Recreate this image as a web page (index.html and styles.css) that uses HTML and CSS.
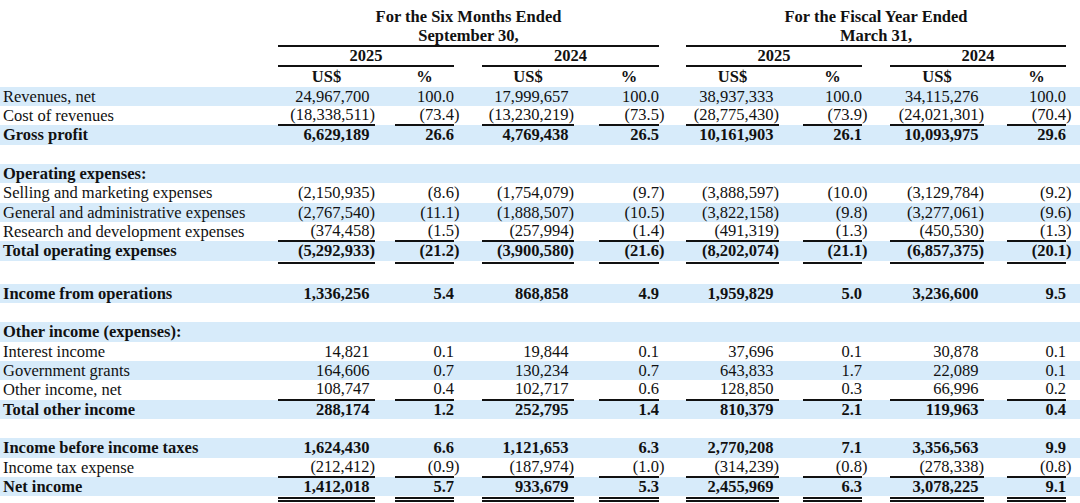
FILE: index.html
```html
<!DOCTYPE html>
<html lang="en">
<head>
<meta charset="utf-8">
<title>Consolidated Statements of Operations</title>
<link rel="stylesheet" href="styles.css">
</head>
<body>
<table class="fin">
  <colgroup>
    <col class="w-label"><col class="w-a"><col class="w-b"><col class="w-c"><col class="w-d"><col class="w-e"><col class="w-f"><col class="w-g"><col class="w-h"><col class="w-end">
  </colgroup>
  <thead>
    <tr class="hrow">
      <td></td>
      <td colspan="4" class="ca"><div class="hc">For the Six Months Ended</div></td>
      <td colspan="4" class="ce"><div class="hc">For the Fiscal Year Ended</div></td>
      <td></td>
    </tr>
    <tr class="hrow">
      <td></td>
      <td colspan="4" class="ca"><div class="hc ul">September 30,</div></td>
      <td colspan="4" class="ce"><div class="hc ul">March 31,</div></td>
      <td></td>
    </tr>
    <tr class="hrow">
      <td></td>
      <td colspan="2" class="ca"><div class="hc ul">2025</div></td>
      <td colspan="2" class="cc"><div class="hc ul">2024</div></td>
      <td colspan="2" class="ce"><div class="hc ul">2025</div></td>
      <td colspan="2" class="cg"><div class="hc ul">2024</div></td>
      <td></td>
    </tr>
    <tr class="hrow">
      <td></td>
      <td class="ca"><div class="hc">US$</div></td>
      <td class="cb"><div class="hc">%</div></td>
      <td class="cc"><div class="hc">US$</div></td>
      <td class="cd"><div class="hc">%</div></td>
      <td class="ce"><div class="hc">US$</div></td>
      <td class="cf"><div class="hc">%</div></td>
      <td class="cg"><div class="hc">US$</div></td>
      <td class="ch"><div class="hc">%</div></td>
      <td></td>
    </tr>
  </thead>
  <tbody>
    <tr class="alt">
      <td class="lbl">Revenues, net</td>
      <td class="ca"><div class="v usd">24,967,700</div></td>
      <td class="cb"><div class="v">100.0</div></td>
      <td class="cc"><div class="v usd">17,999,657</div></td>
      <td class="cd"><div class="v">100.0</div></td>
      <td class="ce"><div class="v usd">38,937,333</div></td>
      <td class="cf"><div class="v">100.0</div></td>
      <td class="cg"><div class="v usd">34,115,276</div></td>
      <td class="ch"><div class="v">100.0</div></td>
      <td></td>
    </tr>
    <tr>
      <td class="lbl">Cost of revenues</td>
      <td class="ca"><div class="v usd ul">(18,338,511<span class="rp">)</span></div></td>
      <td class="cb"><div class="v ul">(73.4<span class="rp">)</span></div></td>
      <td class="cc"><div class="v usd ul">(13,230,219<span class="rp">)</span></div></td>
      <td class="cd"><div class="v ul">(73.5<span class="rp">)</span></div></td>
      <td class="ce"><div class="v usd ul">(28,775,430<span class="rp">)</span></div></td>
      <td class="cf"><div class="v ul">(73.9<span class="rp">)</span></div></td>
      <td class="cg"><div class="v usd ul">(24,021,301<span class="rp">)</span></div></td>
      <td class="ch"><div class="v ul">(70.4<span class="rp">)</span></div></td>
      <td></td>
    </tr>
    <tr class="alt strong">
      <td class="lbl">Gross profit</td>
      <td class="ca"><div class="v usd">6,629,189</div></td>
      <td class="cb"><div class="v">26.6</div></td>
      <td class="cc"><div class="v usd">4,769,438</div></td>
      <td class="cd"><div class="v">26.5</div></td>
      <td class="ce"><div class="v usd">10,161,903</div></td>
      <td class="cf"><div class="v">26.1</div></td>
      <td class="cg"><div class="v usd">10,093,975</div></td>
      <td class="ch"><div class="v">29.6</div></td>
      <td></td>
    </tr>
    <tr class="blank"><td colspan="10"><div class="sp"></div></td></tr>
    <tr class="alt strong">
      <td class="lbl" colspan="10"><div class="sp">Operating expenses:</div></td>
    </tr>
    <tr>
      <td class="lbl">Selling and marketing expenses</td>
      <td class="ca"><div class="v usd">(2,150,935<span class="rp">)</span></div></td>
      <td class="cb"><div class="v">(8.6<span class="rp">)</span></div></td>
      <td class="cc"><div class="v usd">(1,754,079<span class="rp">)</span></div></td>
      <td class="cd"><div class="v">(9.7<span class="rp">)</span></div></td>
      <td class="ce"><div class="v usd">(3,888,597<span class="rp">)</span></div></td>
      <td class="cf"><div class="v">(10.0<span class="rp">)</span></div></td>
      <td class="cg"><div class="v usd">(3,129,784<span class="rp">)</span></div></td>
      <td class="ch"><div class="v">(9.2<span class="rp">)</span></div></td>
      <td></td>
    </tr>
    <tr class="alt">
      <td class="lbl">General and administrative expenses</td>
      <td class="ca"><div class="v usd">(2,767,540<span class="rp">)</span></div></td>
      <td class="cb"><div class="v">(11.1<span class="rp">)</span></div></td>
      <td class="cc"><div class="v usd">(1,888,507<span class="rp">)</span></div></td>
      <td class="cd"><div class="v">(10.5<span class="rp">)</span></div></td>
      <td class="ce"><div class="v usd">(3,822,158<span class="rp">)</span></div></td>
      <td class="cf"><div class="v">(9.8<span class="rp">)</span></div></td>
      <td class="cg"><div class="v usd">(3,277,061<span class="rp">)</span></div></td>
      <td class="ch"><div class="v">(9.6<span class="rp">)</span></div></td>
      <td></td>
    </tr>
    <tr>
      <td class="lbl">Research and development expenses</td>
      <td class="ca"><div class="v usd ul">(374,458<span class="rp">)</span></div></td>
      <td class="cb"><div class="v ul">(1.5<span class="rp">)</span></div></td>
      <td class="cc"><div class="v usd ul">(257,994<span class="rp">)</span></div></td>
      <td class="cd"><div class="v ul">(1.4<span class="rp">)</span></div></td>
      <td class="ce"><div class="v usd ul">(491,319<span class="rp">)</span></div></td>
      <td class="cf"><div class="v ul">(1.3<span class="rp">)</span></div></td>
      <td class="cg"><div class="v usd ul">(450,530<span class="rp">)</span></div></td>
      <td class="ch"><div class="v ul">(1.3<span class="rp">)</span></div></td>
      <td></td>
    </tr>
    <tr class="alt strong">
      <td class="lbl">Total operating expenses</td>
      <td class="ca"><div class="v usd">(5,292,933<span class="rp">)</span></div></td>
      <td class="cb"><div class="v">(21.2<span class="rp">)</span></div></td>
      <td class="cc"><div class="v usd">(3,900,580<span class="rp">)</span></div></td>
      <td class="cd"><div class="v">(21.6<span class="rp">)</span></div></td>
      <td class="ce"><div class="v usd">(8,202,074<span class="rp">)</span></div></td>
      <td class="cf"><div class="v">(21.1<span class="rp">)</span></div></td>
      <td class="cg"><div class="v usd">(6,857,375<span class="rp">)</span></div></td>
      <td class="ch"><div class="v">(20.1<span class="rp">)</span></div></td>
      <td></td>
    </tr>
    <tr class="rule">
      <td></td>
      <td class="ca"><div class="ln"></div></td>
      <td class="cb"><div class="ln"></div></td>
      <td class="cc"><div class="ln"></div></td>
      <td class="cd"><div class="ln"></div></td>
      <td class="ce"><div class="ln"></div></td>
      <td class="cf"><div class="ln"></div></td>
      <td class="cg"><div class="ln"></div></td>
      <td class="ch"><div class="ln"></div></td>
      <td></td>
    </tr>
    <tr class="alt strong">
      <td class="lbl">Income from operations</td>
      <td class="ca"><div class="v usd">1,336,256</div></td>
      <td class="cb"><div class="v">5.4</div></td>
      <td class="cc"><div class="v usd">868,858</div></td>
      <td class="cd"><div class="v">4.9</div></td>
      <td class="ce"><div class="v usd">1,959,829</div></td>
      <td class="cf"><div class="v">5.0</div></td>
      <td class="cg"><div class="v usd">3,236,600</div></td>
      <td class="ch"><div class="v">9.5</div></td>
      <td></td>
    </tr>
    <tr class="blank"><td colspan="10"><div class="sp"></div></td></tr>
    <tr class="alt strong">
      <td class="lbl" colspan="10"><div class="sp">Other income (expenses):</div></td>
    </tr>
    <tr>
      <td class="lbl">Interest income</td>
      <td class="ca"><div class="v usd">14,821</div></td>
      <td class="cb"><div class="v">0.1</div></td>
      <td class="cc"><div class="v usd">19,844</div></td>
      <td class="cd"><div class="v">0.1</div></td>
      <td class="ce"><div class="v usd">37,696</div></td>
      <td class="cf"><div class="v">0.1</div></td>
      <td class="cg"><div class="v usd">30,878</div></td>
      <td class="ch"><div class="v">0.1</div></td>
      <td></td>
    </tr>
    <tr class="alt">
      <td class="lbl">Government grants</td>
      <td class="ca"><div class="v usd">164,606</div></td>
      <td class="cb"><div class="v">0.7</div></td>
      <td class="cc"><div class="v usd">130,234</div></td>
      <td class="cd"><div class="v">0.7</div></td>
      <td class="ce"><div class="v usd">643,833</div></td>
      <td class="cf"><div class="v">1.7</div></td>
      <td class="cg"><div class="v usd">22,089</div></td>
      <td class="ch"><div class="v">0.1</div></td>
      <td></td>
    </tr>
    <tr>
      <td class="lbl">Other income, net</td>
      <td class="ca"><div class="v usd ul">108,747</div></td>
      <td class="cb"><div class="v ul">0.4</div></td>
      <td class="cc"><div class="v usd ul">102,717</div></td>
      <td class="cd"><div class="v ul">0.6</div></td>
      <td class="ce"><div class="v usd ul">128,850</div></td>
      <td class="cf"><div class="v ul">0.3</div></td>
      <td class="cg"><div class="v usd ul">66,996</div></td>
      <td class="ch"><div class="v ul">0.2</div></td>
      <td></td>
    </tr>
    <tr class="alt strong">
      <td class="lbl">Total other income</td>
      <td class="ca"><div class="v usd">288,174</div></td>
      <td class="cb"><div class="v">1.2</div></td>
      <td class="cc"><div class="v usd">252,795</div></td>
      <td class="cd"><div class="v">1.4</div></td>
      <td class="ce"><div class="v usd">810,379</div></td>
      <td class="cf"><div class="v">2.1</div></td>
      <td class="cg"><div class="v usd">119,963</div></td>
      <td class="ch"><div class="v">0.4</div></td>
      <td></td>
    </tr>
    <tr class="blank"><td colspan="10"><div class="sp"></div></td></tr>
    <tr class="alt strong">
      <td class="lbl">Income before income taxes</td>
      <td class="ca"><div class="v usd">1,624,430</div></td>
      <td class="cb"><div class="v">6.6</div></td>
      <td class="cc"><div class="v usd">1,121,653</div></td>
      <td class="cd"><div class="v">6.3</div></td>
      <td class="ce"><div class="v usd">2,770,208</div></td>
      <td class="cf"><div class="v">7.1</div></td>
      <td class="cg"><div class="v usd">3,356,563</div></td>
      <td class="ch"><div class="v">9.9</div></td>
      <td></td>
    </tr>
    <tr>
      <td class="lbl">Income tax expense</td>
      <td class="ca"><div class="v usd ul">(212,412<span class="rp">)</span></div></td>
      <td class="cb"><div class="v ul">(0.9<span class="rp">)</span></div></td>
      <td class="cc"><div class="v usd ul">(187,974<span class="rp">)</span></div></td>
      <td class="cd"><div class="v ul">(1.0<span class="rp">)</span></div></td>
      <td class="ce"><div class="v usd ul">(314,239<span class="rp">)</span></div></td>
      <td class="cf"><div class="v ul">(0.8<span class="rp">)</span></div></td>
      <td class="cg"><div class="v usd ul">(278,338<span class="rp">)</span></div></td>
      <td class="ch"><div class="v ul">(0.8<span class="rp">)</span></div></td>
      <td></td>
    </tr>
    <tr class="alt strong">
      <td class="lbl">Net income</td>
      <td class="ca"><div class="v usd">1,412,018</div></td>
      <td class="cb"><div class="v">5.7</div></td>
      <td class="cc"><div class="v usd">933,679</div></td>
      <td class="cd"><div class="v">5.3</div></td>
      <td class="ce"><div class="v usd">2,455,969</div></td>
      <td class="cf"><div class="v">6.3</div></td>
      <td class="cg"><div class="v usd">3,078,225</div></td>
      <td class="ch"><div class="v">9.1</div></td>
      <td></td>
    </tr>
    <tr class="rule2">
      <td></td>
      <td class="ca"><div class="dl"></div></td>
      <td class="cb"><div class="dl"></div></td>
      <td class="cc"><div class="dl"></div></td>
      <td class="cd"><div class="dl"></div></td>
      <td class="ce"><div class="dl"></div></td>
      <td class="cf"><div class="dl"></div></td>
      <td class="cg"><div class="dl"></div></td>
      <td class="ch"><div class="dl"></div></td>
      <td></td>
    </tr>
  </tbody>
</table>
</body>
</html>
```

FILE: styles.css
```css
html, body {
  margin: 0;
  padding: 0;
  background: #ffffff;
}

body {
  font-family: "Liberation Serif", "Times New Roman", serif;
  font-size: 16.5px;
  color: #111111;
}

.fin {
  width: 1080px;
  margin-top: 7px;
  table-layout: fixed;
  border-collapse: separate;
  border-spacing: 0;
}

.fin td {
  padding: 0;
  vertical-align: top;
  white-space: nowrap;
}

/* column widths (each includes the gap left of the column) */
.w-label { width: 278px; }
.w-a { width: 97px; }
.w-b { width: 79px; }
.w-c { width: 120px; }
.w-d { width: 85px; }
.w-e { width: 120px; }
.w-f { width: 83px; }
.w-g { width: 122px; }
.w-h { width: 82px; }
.w-end { width: 14px; }

.fin td.ca { padding-left: 0; }
.fin td.cb { padding-left: 20px; }
.fin td.cc { padding-left: 28px; }
.fin td.cd { padding-left: 25px; }
.fin td.ce { padding-left: 27px; }
.fin td.cf { padding-left: 24px; }
.fin td.cg { padding-left: 28px; }
.fin td.ch { padding-left: 23px; }

/* header */
.hc {
  box-sizing: border-box;
  height: 19.9px;
  line-height: 19.9px;
  text-align: center;
  font-weight: bold;
}

.hc.ul {
  border-bottom: 2px solid #111111;
  line-height: 18.4px;
}

/* body rows */
.alt {
  background: #d7ebfa;
}

.strong {
  font-weight: bold;
}

.fin td.lbl {
  padding-left: 3px;
  height: 19.35px;
  line-height: 19.35px;
}

.sp {
  height: 19.35px;
  line-height: 19.35px;
}

.v {
  box-sizing: border-box;
  height: 19.35px;
  line-height: 19.35px;
  text-align: right;
}

.v.usd {
  padding-right: 0.333em;
}

/* single rule under a column of figures, sitting on the row boundary */
.v.ul {
  position: relative;
  line-height: 18.6px;
}

.v.ul::after {
  content: "";
  position: absolute;
  left: 0;
  right: 0;
  bottom: -1px;
  height: 2px;
  background: #111111;
}

.rp {
  margin-right: -0.333em;
}

.rule td {
  height: 23px;
}

.ln {
  height: 0;
  margin-top: 1px;
  border-top: 2px solid #111111;
}

.rule2 td {
  height: 6px;
}

.dl {
  height: 0;
  margin-top: 0.5px;
  border-top: 5px double #111111;
}
```
